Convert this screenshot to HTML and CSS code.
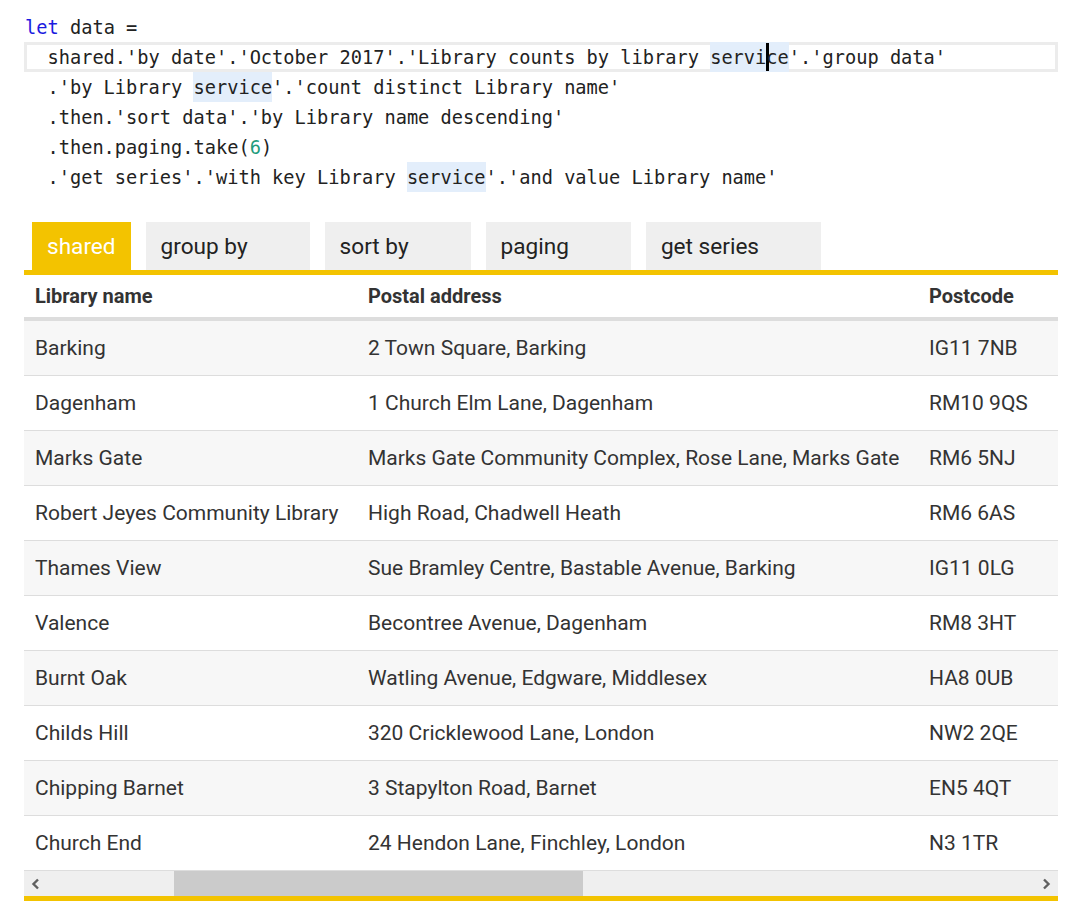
FILE: index.html
```html
<!DOCTYPE html>
<html>
<head>
<meta charset="utf-8">
<link rel="stylesheet" href="styles.css">
</head>
<body>
<div class="code">
  <div class="line"><span class="kw">let</span> data =</div>
  <div class="line active">  shared.'by date'.'October 2017'.'Library counts by library <span class="hl">servi<span class="cursor"></span>ce</span>'.'group data'</div>
  <div class="line">  .'by Library <span class="hl">service</span>'.'count distinct Library name'</div>
  <div class="line">  .then.'sort data'.'by Library name descending'</div>
  <div class="line">  .then.paging.take(<span class="num">6</span>)</div>
  <div class="line">  .'get series'.'with key Library <span class="hl">service</span>'.'and value Library name'</div>
</div>

<div class="tabs">
  <div class="tab selected">shared</div>
  <div class="tab">group by</div>
  <div class="tab">sort by</div>
  <div class="tab">paging</div>
  <div class="tab">get series</div>
</div>

<div class="panel">
  <div class="table-wrap">
    <table class="grid">
      <colgroup><col class="c1"><col class="c2"><col class="c3"></colgroup>
      <thead>
        <tr><th>Library name</th><th>Postal address</th><th>Postcode</th></tr>
      </thead>
      <tbody>
        <tr><td>Barking</td><td>2 Town Square, Barking</td><td>IG11 7NB</td></tr>
        <tr><td>Dagenham</td><td>1 Church Elm Lane, Dagenham</td><td>RM10 9QS</td></tr>
        <tr><td>Marks Gate</td><td>Marks Gate Community Complex, Rose Lane, Marks Gate</td><td>RM6 5NJ</td></tr>
        <tr><td>Robert Jeyes Community Library</td><td>High Road, Chadwell Heath</td><td>RM6 6AS</td></tr>
        <tr><td>Thames View</td><td>Sue Bramley Centre, Bastable Avenue, Barking</td><td>IG11 0LG</td></tr>
        <tr><td>Valence</td><td>Becontree Avenue, Dagenham</td><td>RM8 3HT</td></tr>
        <tr><td>Burnt Oak</td><td>Watling Avenue, Edgware, Middlesex</td><td>HA8 0UB</td></tr>
        <tr><td>Childs Hill</td><td>320 Cricklewood Lane, London</td><td>NW2 2QE</td></tr>
        <tr><td>Chipping Barnet</td><td>3 Stapylton Road, Barnet</td><td>EN5 4QT</td></tr>
        <tr><td>Church End</td><td>24 Hendon Lane, Finchley, London</td><td>N3 1TR</td></tr>
      </tbody>
    </table>
  </div>
  <div class="hscroll">
    <div class="arrow left"><svg width="10" height="12" viewBox="0 0 10 12"><path d="M7 1.5 L2.5 6 L7 10.5" fill="none" stroke="#606060" stroke-width="2.4"/></svg></div>
    <div class="track"><div class="thumb"></div></div>
    <div class="arrow right"><svg width="10" height="12" viewBox="0 0 10 12"><path d="M3 1.5 L7.5 6 L3 10.5" fill="none" stroke="#606060" stroke-width="2.4"/></svg></div>
  </div>
</div>
</body>
</html>
```

FILE: styles.css
```css
html, body {
  margin: 0;
  padding: 0;
  background: #fff;
}
body {
  padding: 12px 12px 0 24px;
  font-family: Roboto, "Liberation Sans", sans-serif;
  color: #333;
}
.code {
  font-family: "DejaVu Sans Mono", "Liberation Mono", monospace;
  font-size: 18.67px;
  color: #222;
}
.line {
  height: 30px;
  line-height: 31px;
  white-space: pre;
  padding-left: 1px;
}
.line.active {
  box-shadow: inset 0 0 0 3px #ececec;
}
.kw { color: #1b1be0; }
.num { color: #1f9c7c; }
.hl {
  display: inline-block;
  background: #e3eefb;
  line-height: 31px;
  height: 30px;
}
.cursor {
  display: inline-block;
  width: 3px;
  height: 28px;
  margin-right: -3px;
  background: #000;
  vertical-align: top;
  margin-top: 1px;
}
.tabs {
  display: flex;
  gap: 15px;
  margin-top: 30px;
  padding-left: 8px;
}
.tab {
  height: 48px;
  line-height: 49px;
  padding: 0 62px 0 15px;
  background: #efefef;
  color: #222;
  font-size: 22.6px;
}
.tab.selected {
  background: #f3c300;
  color: #fff;
  padding: 0 15px 0 15px;
}
.panel {
  border-top: 5px solid #f3c300;
  border-bottom: 5px solid #f3c300;
}
.table-wrap {
  overflow: hidden;
}
.grid {
  width: 100%;
  table-layout: fixed;
  border-collapse: collapse;
  font-size: 21px;
}
.c1 { width: 333px; }
.c2 { width: 561px; }
.grid th {
  text-align: left;
  font-weight: 700;
  font-size: 20px;
  height: 42px;
  padding: 0 11px;
  border-bottom: 4px solid #dddddd;
  color: #333;
  white-space: nowrap;
}
.grid td {
  height: 54px;
  padding: 0 11px;
  border-bottom: 1px solid #dddddd;
  white-space: nowrap;
  color: #333;
}
.grid tbody tr:nth-child(odd) td {
  background: #f7f7f7;
}
.hscroll {
  display: flex;
  height: 25px;
  background: #efefef;
}
.arrow {
  width: 16px;
  display: flex;
  align-items: center;
  justify-content: center;
}
.arrow.left { padding-left: 4px; }
.arrow.right { padding-right: 4px; }
.track {
  flex: 1;
  position: relative;
}
.thumb {
  margin-left: 130px;
  width: 409px;
  height: 25px;
  background: #cbcbcb;
}
```
